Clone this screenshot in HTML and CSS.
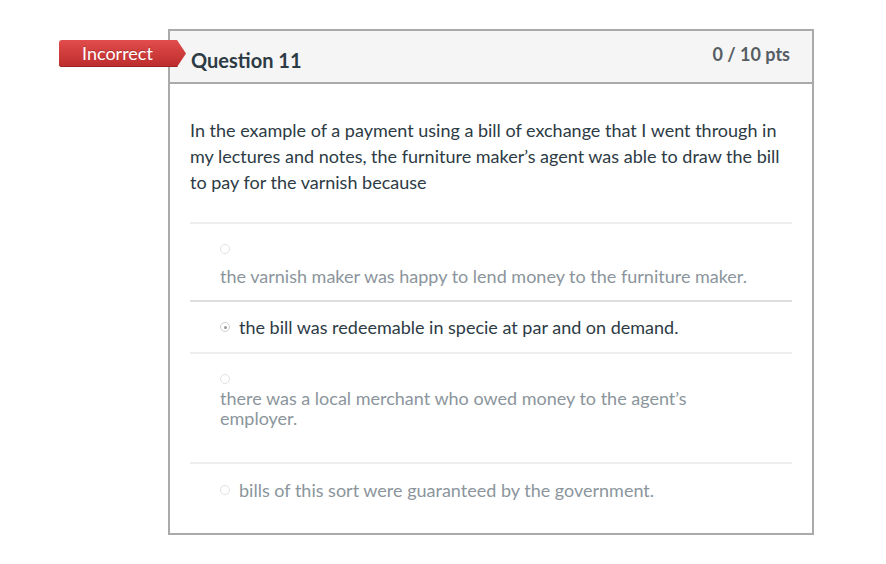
FILE: index.html
```html
<!DOCTYPE html>
<html lang="en">
<head>
<meta charset="utf-8">
<title>Question 11</title>
<link rel="stylesheet" href="styles.css">
</head>
<body>
<div class="card">
  <div class="tag"><span>Incorrect</span></div>
  <div class="header">
    <h2 class="title">Question 11</h2>
    <div class="pts">0 / 10 pts</div>
  </div>
  <div class="content">
    <p class="question">In the example of a payment using a bill of exchange that I went through in my lectures and notes, the furniture maker’s agent was able to draw the bill to pay for the varnish because</p>
    <div class="answer stacked a1">
      <span class="radio"></span>
      <div class="label">the varnish maker was happy to lend money to the furniture maker.</div>
    </div>
    <div class="answer inline selected">
      <span class="radio checked"></span>
      <div class="label">the bill was redeemable in specie at par and on demand.</div>
    </div>
    <div class="answer stacked a3">
      <span class="radio"></span>
      <div class="label">there was a local merchant who owed money to the agent’s employer.</div>
    </div>
    <div class="answer inline a4">
      <span class="radio"></span>
      <div class="label">bills of this sort were guaranteed by the government.</div>
    </div>
  </div>
</div>
</body>
</html>
```
FILE: styles.css
```css
* { box-sizing: border-box; }
body {
  margin: 0;
  background: #fff;
  font-family: Lato, "Open Sans", "Liberation Sans", sans-serif;
  color: #2d3b45;
}
.card {
  position: relative;
  margin: 29px 0 0 168px;
  width: 646px;
  height: 506px;
  border: 2px solid #aaaaaa;
  background: #fff;
}
.tag {
  position: absolute;
  left: -111px;
  top: 9px;
  width: 127px;
  height: 27px;
  border-radius: 3px 0 0 3px;
  background: linear-gradient(#e24c4c, #bc2c2c);
  box-shadow: inset 0 -1px 0 #9e2222;
  clip-path: polygon(0 0, 118px 0, 127px 50%, 118px 100%, 0 100%);
  color: #fff;
  font-size: 18px;
  line-height: 27px;
  padding-left: 23px;
  text-shadow: 0 -1px 0 rgba(0,0,0,0.2);
  z-index: 2;
}
.header {
  display: flex;
  justify-content: space-between;
  align-items: flex-start;
  height: 53px;
  background: #f5f5f5;
  border-bottom: 2px solid #aaaaaa;
  padding: 0 22px 0 21px;
}
.title {
  margin: 17px 0 0;
  font-size: 20px;
  line-height: 24px;
  font-weight: 700;
  color: #2d3b45;
}
.pts {
  margin-top: 12px;
  font-size: 18px;
  line-height: 22px;
  font-weight: 700;
  color: #555d63;
}
.content {
  padding: 33px 20px 0 20px;
}
.question {
  margin: 0 0 27px;
  font-size: 18px;
  line-height: 26px;
  color: #2d3b45;
}
.answer {
  border-top: 2px solid #eeeeee;
  padding: 15px 0 15px 30px;
  font-size: 18px;
  line-height: 20px;
  color: #8b959c;
}
.answer.selected {
  border-top-color: #dddddd;
  color: #2d3b45;
}
.answer.inline {
  display: flex;
  align-items: center;
  gap: 9px;
}
.answer.stacked .radio {
  display: block;
}
.answer.stacked .label {
  max-width: 535px;
}
.a1 { padding-top: 14px; padding-bottom: 14px; }
.a1 .radio { margin: 6px 0 12px; }
.a3 { padding-top: 14px; padding-bottom: 34px; }
.a3 .radio { margin: 6px 0 4px; }
.a4 { padding-top: 16px; }
.radio {
  position: relative;
  width: 10px;
  height: 10px;
  border-radius: 50%;
  border: 1px solid #e2e2e2;
  background: #fff;
  flex: none;
}
.radio.checked {
  border-color: #cfcfcf;
}
.radio.checked::after {
  content: "";
  position: absolute;
  left: 2.5px;
  top: 2.5px;
  width: 3px;
  height: 3px;
  border-radius: 50%;
  background: #9a9a9a;
}
```
